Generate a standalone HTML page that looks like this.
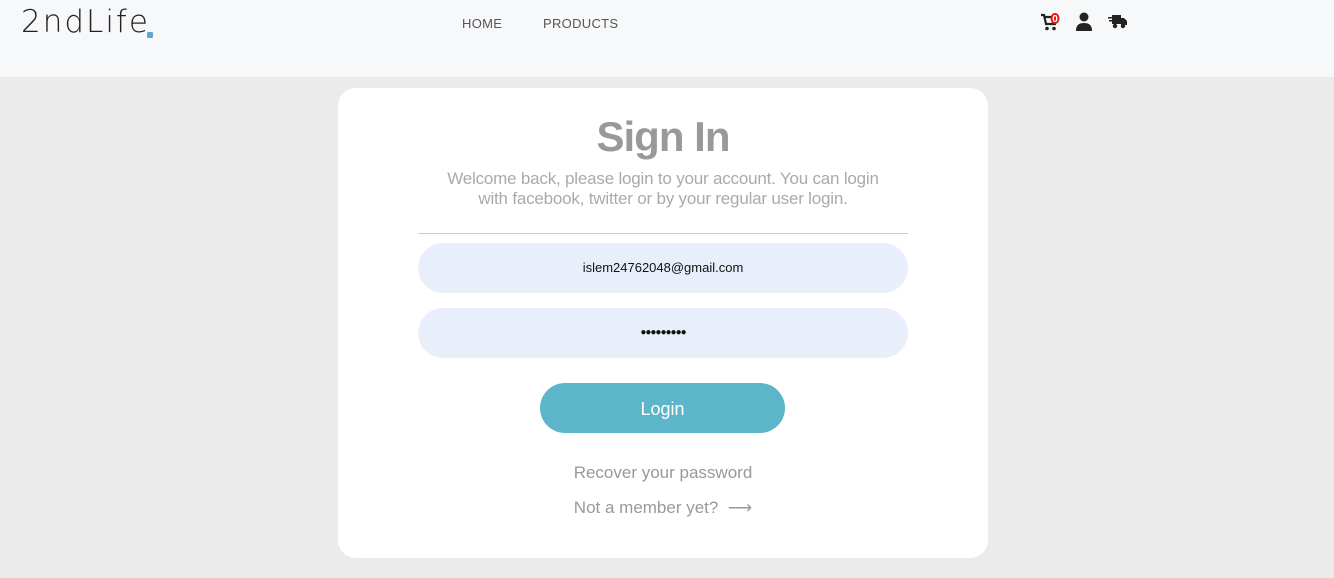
<!DOCTYPE html>
<html><head><meta charset="utf-8"><style>
body{margin:0;width:1334px;height:578px;background:#ebebeb;font-family:"Liberation Sans",sans-serif;overflow:hidden;position:relative}
.nav{position:absolute;left:0;top:0;width:1334px;height:77px;background:#f7f8fa}
.logo{position:absolute;left:21px;top:4px;font-size:31px;letter-spacing:2px;color:#222;font-family:"DejaVu Sans",sans-serif;font-weight:300}
.dot{position:absolute;left:147px;top:32px;width:6px;height:6px;background:#5fa9cf;border-radius:1px}
.menu{position:absolute;top:16px;font-size:13px;color:#555;font-family:"Liberation Sans",sans-serif;letter-spacing:.3px}
.card{position:absolute;left:338px;top:88px;width:650px;height:470px;background:#fff;border-radius:18px}
h1{position:absolute;width:650px;top:113px;margin:0;text-align:center;font-size:42px;color:#999;font-weight:bold;letter-spacing:-1px}
.sub{position:absolute;left:338px;width:650px;top:169px;text-align:center;font-size:17px;line-height:20px;color:#aaa;letter-spacing:-.2px}
.hr{position:absolute;left:418px;top:233px;width:490px;height:1px;background:#ccc}
.in{position:absolute;left:418px;width:490px;height:50px;border-radius:25px;background:#e8effb;text-align:center;line-height:50px;font-size:13px;color:#111}
.btn{position:absolute;left:540px;top:383px;width:245px;height:50px;border-radius:25px;background:#5cb5c8;color:#fff;text-align:center;line-height:52px;font-size:18px}
.link{position:absolute;left:338px;width:650px;text-align:center;font-size:17px;color:#999}
</style></head><body>
<div class="nav">
<div class="logo">2ndLife</div><div class="dot"></div>
<div class="menu" style="left:462px">HOME</div>
<div class="menu" style="left:543px">PRODUCTS</div>
<svg style="position:absolute;left:1040px;top:12px" width="22" height="20" viewBox="0 0 22 20"><path d="M1 3h3l2 9h9l2-7H5" fill="none" stroke="#222" stroke-width="2.2"/><circle cx="7" cy="16.5" r="1.8" fill="#222"/><circle cx="14" cy="16.5" r="1.8" fill="#222"/><ellipse cx="15" cy="6.5" rx="4.5" ry="5.5" fill="#e11"/><text x="15" y="10" font-size="10" fill="#fff" text-anchor="middle" font-family="Liberation Sans" font-weight="bold">0</text></svg>
<svg style="position:absolute;left:1076px;top:12px" width="16" height="19" viewBox="0 0 16 19"><circle cx="8" cy="5" r="4.5" fill="#222"/><path d="M0 19c0-6 3-8 8-8s8 2 8 8z" fill="#222"/></svg>
<svg style="position:absolute;left:1108px;top:13px" width="20" height="17" viewBox="0 0 20 17"><rect x="4" y="2" width="9" height="9" fill="#222"/><path d="M13 5h3l3 3v4h-6z" fill="#222"/><rect x="0" y="4" width="4" height="1.5" fill="#222"/><rect x="1" y="7" width="3" height="1.5" fill="#222"/><circle cx="7" cy="13" r="2.2" fill="#222"/><circle cx="15" cy="13" r="2.2" fill="#222"/></svg>
</div>
<div class="card"></div>
<h1 style="left:338px">Sign In</h1>
<div class="sub">Welcome back, please login to your account. You can login<br>with facebook, twitter or by your regular user login.</div>
<div class="hr"></div>
<div class="in" style="top:243px">islem24762048@gmail.com</div>
<div class="in" style="top:308px;font-size:10px;letter-spacing:-1px">●●●●●●●●●</div>
<div class="btn">Login</div>
<div class="link" style="top:463px">Recover your password</div>
<div class="link" style="top:498px">Not a member yet? &nbsp;⟶</div>
</body></html>
